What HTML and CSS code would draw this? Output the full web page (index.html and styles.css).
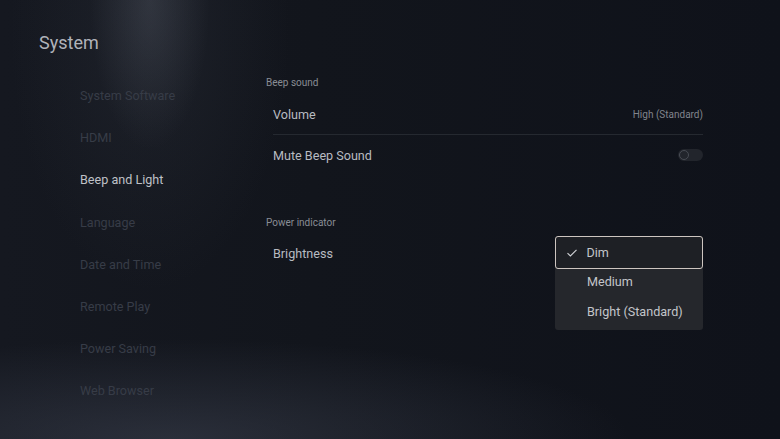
FILE: index.html
```html
<!DOCTYPE html>
<html lang="en">

<head>
    <meta charset="UTF-8">
    <meta name="viewport" content="width=device-width, initial-scale=1.0">
    <title>System</title>
    <link rel="stylesheet" href="styles.css">
</head>

<body>
    <div class="screen">
        <div class="sidebar">
            <h1 class="title">System</h1>
            <ul class="nav">
                <li class="nav-item">System Software</li>
                <li class="nav-item">HDMI</li>
                <li class="nav-item active">Beep and Light</li>
                <li class="nav-item">Language</li>
                <li class="nav-item">Date and Time</li>
                <li class="nav-item">Remote Play</li>
                <li class="nav-item">Power Saving</li>
                <li class="nav-item">Web Browser</li>
            </ul>
        </div>

        <div class="content">
            <div class="section">
                <div class="section-head">Beep sound</div>
                <div class="row line">
                    <span class="label">Volume</span>
                    <span class="value">High (Standard)</span>
                </div>
                <div class="row">
                    <span class="label">Mute Beep Sound</span>
                    <span class="toggle"><span class="knob"></span></span>
                </div>
            </div>

            <div class="section second">
                <div class="section-head">Power indicator</div>
                <div class="row menu-row">
                    <span class="label">Brightness</span>
                    <div class="dropdown">
                        <div class="option selected">
                            <svg class="check" width="12" height="10" viewBox="0 0 12 10">
                                <path d="M1.5 5.2 L4.4 8 L10.5 1.8" fill="none" stroke="#d0d2d6" stroke-width="1.1"/>
                            </svg>
                            Dim
                        </div>
                        <div class="option">Medium</div>
                        <div class="option">Bright (Standard)</div>
                    </div>
                </div>
            </div>
        </div>
    </div>
</body>

</html>
```

FILE: styles.css
```css
* {
    padding: 0;
    margin: 0;
    box-sizing: border-box;
}

body {
    width: 780px;
    height: 439px;
    overflow: hidden;
    font-family: Roboto, "Noto Sans", sans-serif;
    background-color: #11141b;
    background-image:
        radial-gradient(ellipse 60px 150px at 150px 0px, rgba(120, 126, 140, 0.22), rgba(0, 0, 0, 0) 100%),
        radial-gradient(ellipse 140px 260px at 150px 30px, rgba(70, 76, 88, 0.2), rgba(0, 0, 0, 0) 100%),
        radial-gradient(ellipse 460px 100px at 170px 439px, rgba(70, 76, 92, 0.45), rgba(0, 0, 0, 0) 100%),
        linear-gradient(90deg, #151820 0%, #12151c 40%, #0f121a 100%);
}

.screen {
    display: flex;
    height: 439px;
}

.sidebar {
    width: 266px;
    padding: 29px 0 0 39px;
}

.title {
    font-size: 18px;
    font-weight: normal;
    line-height: 28px;
    color: #b0b3ba;
}

.nav {
    list-style: none;
    margin-top: 18px;
    padding-left: 41px;
}

.nav-item {
    font-size: 12.6px;
    line-height: 42.2px;
    height: 42.2px;
    color: #373c47;
}

.nav-item.active {
    color: #bfc1c7;
}

.content {
    width: 437px;
    padding-top: 76px;
}

.section-head {
    font-size: 10px;
    line-height: 14px;
    margin-bottom: 4px;
    color: #898d95;
}

.second {
    margin-top: 41px;
}

.second .section-head {
    margin-bottom: 3px;
}

.row {
    display: flex;
    justify-content: space-between;
    align-items: center;
    height: 40px;
    margin-left: 7px;
}

.row.line {
    height: 41px;
    border-bottom: 1px solid #252930;
}

.label {
    font-size: 12.6px;
    color: #b8bbc1;
}

.value {
    font-size: 10px;
    color: #80848c;
}

.toggle {
    display: flex;
    align-items: center;
    width: 25px;
    height: 12px;
    border-radius: 6px;
    background: #22252c;
    padding-left: 1px;
}

.knob {
    width: 10px;
    height: 10px;
    border-radius: 50%;
    border: 1px solid #484c54;
}

.menu-row {
    position: relative;
}

.dropdown {
    position: absolute;
    right: 0;
    top: 3px;
    width: 148px;
    padding-bottom: 4px;
    background: #25272c;
    border-radius: 3px;
}

.option {
    display: flex;
    align-items: center;
    height: 30px;
    padding-left: 32px;
    font-size: 12.6px;
    color: #c3c5ca;
}

.option.selected {
    position: relative;
    z-index: 1;
    height: 33px;
    margin-bottom: -3px;
    border: 1.5px solid #cdc5c0;
    border-radius: 3px;
    background: #1e2025;
    padding-left: 30.5px;
}

.check {
    position: absolute;
    left: 10px;
    top: 10.5px;
}
```
